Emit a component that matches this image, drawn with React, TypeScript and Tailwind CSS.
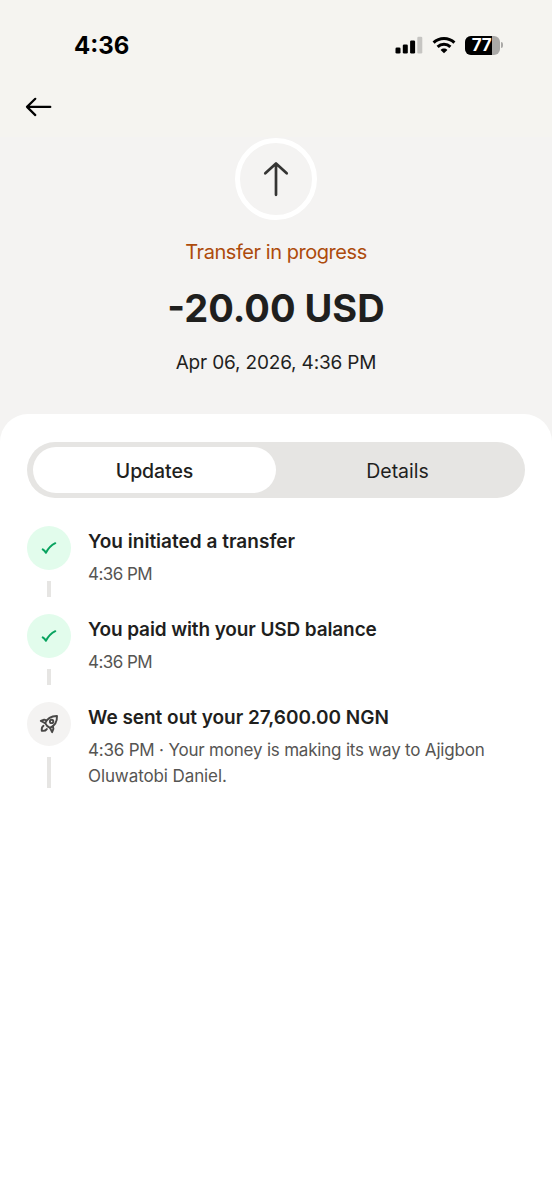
import { useState } from "react";

type Step = {
  title: string;
  titleClass: string;
  lines: { text: string; className: string }[];
  done: boolean;
};

const steps: Step[] = [
  {
    title: "You initiated a transfer",
    titleClass: "tracking-[0.02px]",
    lines: [{ text: "4:36 PM", className: "tracking-[-0.55px]" }],
    done: true,
  },
  {
    title: "You paid with your USD balance",
    titleClass: "tracking-[-0.12px]",
    lines: [{ text: "4:36 PM", className: "tracking-[-0.55px]" }],
    done: true,
  },
  {
    title: "We sent out your 27,600.00 NGN",
    titleClass: "tracking-[-0.02px]",
    lines: [
      { text: "4:36 PM · Your money is making its way to Ajigbon", className: "tracking-[-0.2px]" },
      { text: "Oluwatobi Daniel.", className: "tracking-[-0.1px]" },
    ],
    done: false,
  },
];

function SignalIcon() {
  return (
    <svg width="28" height="18" viewBox="0 0 28 18">
      <rect x="0.5" y="11.5" width="5" height="6" rx="1.3" fill="#000" />
      <rect x="7.8" y="8.5" width="5" height="9" rx="1.3" fill="#000" />
      <rect x="15.1" y="4.5" width="5" height="13" rx="1.3" fill="#000" />
      <rect x="22.3" y="0.8" width="5" height="16.7" rx="1.3" fill="#c6c5c2" />
    </svg>
  );
}

function WifiIcon() {
  return (
    <svg width="24" height="18" viewBox="0 0 24 18" fill="none" stroke="#000" strokeWidth="3">
      <path d="M1.6 6.6C7.4 1 16.6 1 22.4 6.6" />
      <path d="M5.6 10.8c3.6-3.4 9.2-3.4 12.8 0" />
      <path d="M12 17.2 8.6 13.9c1.9-1.8 4.9-1.8 6.8 0z" fill="#000" stroke="none" />
    </svg>
  );
}

function BatteryIcon() {
  return (
    <div className="flex items-center gap-[1px]">
      <div className="relative h-[19px] w-[35px] overflow-hidden rounded-[6px] bg-[#aaa9a7]">
        <div className="h-full w-[27px] bg-black" />
        <span className="absolute inset-0 pr-[2px] text-center text-[17px] leading-[19px] font-bold tracking-[-0.2px] text-white">
          77
        </span>
      </div>
      <div className="h-[6px] w-[2px] rounded-r-full bg-[#aaa9a7]" />
    </div>
  );
}

function CheckIcon() {
  return (
    <svg width="16" height="14" viewBox="0 0 16 14" fill="none" stroke="#08a35f" strokeWidth="2" strokeLinecap="round" strokeLinejoin="round">
      <path d="M1.7 8.4c1.3.8 2.4 2 3.2 3.4C7.1 7.6 9.8 4.4 14.3 2.2" />
    </svg>
  );
}

function RocketIcon() {
  return (
    <svg width="20" height="20" viewBox="0 0 20 20" fill="none" stroke="#494847" strokeWidth="1.9" strokeLinecap="round" strokeLinejoin="round">
      <path d="M6.2 9.2C8.2 4.4 12 1.9 18 2c.2 6-2.400 9.800-7 11.800C8.800 13 7.200 11.500 6.200 9.200z" />
      <path d="M7.5 6.400 5.200 5.600 1.800 7l4.400 2.200" />
      <path d="M13.800 12.300l.6 2.500-1.300 3.400-2.100-4.400" />
      <path d="M4.500 11.800c-1.500 1-2 2.800-1.700 5 2.200.3 4-.2 5-1.700" />
      <circle cx="12.600" cy="7.400" r="1.700" />
    </svg>
  );
}

export default function App() {
  const [tab, setTab] = useState<"updates" | "details">("updates");

  return (
    <div className="flex h-[1200px] w-[552px] flex-col overflow-hidden bg-[#f4f3f2] font-['Inter',sans-serif] text-[#1f1f1e]">
      <header className="h-[137px] bg-[#f5f4f0]">
        <div className="flex h-[90px] items-center justify-between pr-[49px] pl-[74px]">
          <span className="pt-px text-[24px] font-bold text-black">4:36</span>
          <div className="flex items-center gap-[9px]">
            <SignalIcon />
            <WifiIcon />
            <BatteryIcon />
          </div>
        </div>
        <button type="button" aria-label="Back" className="ml-[25px] block h-8">
          <svg width="28" height="32" viewBox="0 0 28 32" fill="none" stroke="#000" strokeWidth="2.2" strokeLinecap="round" strokeLinejoin="round">
            <path d="M25.3 16.9H2M10.3 8.8 2 16.9l8.3 8.2" />
          </svg>
        </button>
      </header>

      <section className="flex h-[277px] flex-col items-center whitespace-nowrap">
        <div className="mt-px flex size-[82px] items-center justify-center rounded-full border-[5px] border-white">
          <svg width="28" height="36" viewBox="0 0 28 36" fill="none" stroke="#343433" strokeWidth="2.7" strokeLinecap="round" strokeLinejoin="round">
            <path d="M14 33.8V2.5M3.3 12.3 14 2.5l10.7 9.8" />
          </svg>
        </div>
        <p className="mt-[18px] text-[20px] leading-[28px] tracking-[-0.45px] text-[#ad4b0c]">Transfer in progress</p>
        <h1 className="mt-[18px] text-[38px] leading-[48px] font-bold">-20.00 USD</h1>
        <p className="mt-[17px] text-[19px] leading-[28px] tracking-[-0.17px]">Apr 06, 2026, 4:36 PM</p>
      </section>

      <main className="flex-1 rounded-t-[28px] bg-white px-[27px] pt-[28px]">
        <div className="grid h-[56px] grid-cols-2 rounded-full bg-[#e6e5e3] px-[6px] py-[5px] text-[19.5px]">
          <button
            type="button"
            onClick={() => setTab("updates")}
            className={`rounded-full pt-[3px] tracking-[-0.1px] ${tab === "updates" ? "bg-white font-medium" : ""}`}
          >
            Updates
          </button>
          <button
            type="button"
            onClick={() => setTab("details")}
            className={`rounded-full pt-[3px] ${tab === "details" ? "bg-white font-medium" : ""}`}
          >
            Details
          </button>
        </div>

        <ol className="mt-[28px]">
          {steps.map((step) => (
            <li key={step.title} className="flex gap-[17px] pb-[17px] whitespace-nowrap">
              <div className="flex w-[44px] shrink-0 flex-col items-center">
                <div
                  className={`flex size-[44px] shrink-0 items-center justify-center rounded-full ${
                    step.done ? "bg-[#e2fcec]" : "bg-[#f4f3f2]"
                  }`}
                >
                  {step.done ? <CheckIcon /> : <RocketIcon />}
                </div>
                <div className="mt-[11px] w-[4px] flex-1 bg-[#e6e5e3]" />
              </div>
              <div className={step.done ? "h-[71px]" : "h-[86px]"}>
                <h2 className={`mt-[2px] text-[19px] leading-[28px] font-semibold ${step.titleClass}`}>{step.title}</h2>
                <div className="mt-[5px] text-[17px] leading-[26px] text-[#565553]">
                  {step.lines.map((line) => (
                    <p key={line.text} className={line.className}>
                      {line.text}
                    </p>
                  ))}
                </div>
              </div>
            </li>
          ))}
        </ol>
      </main>
    </div>
  );
}
